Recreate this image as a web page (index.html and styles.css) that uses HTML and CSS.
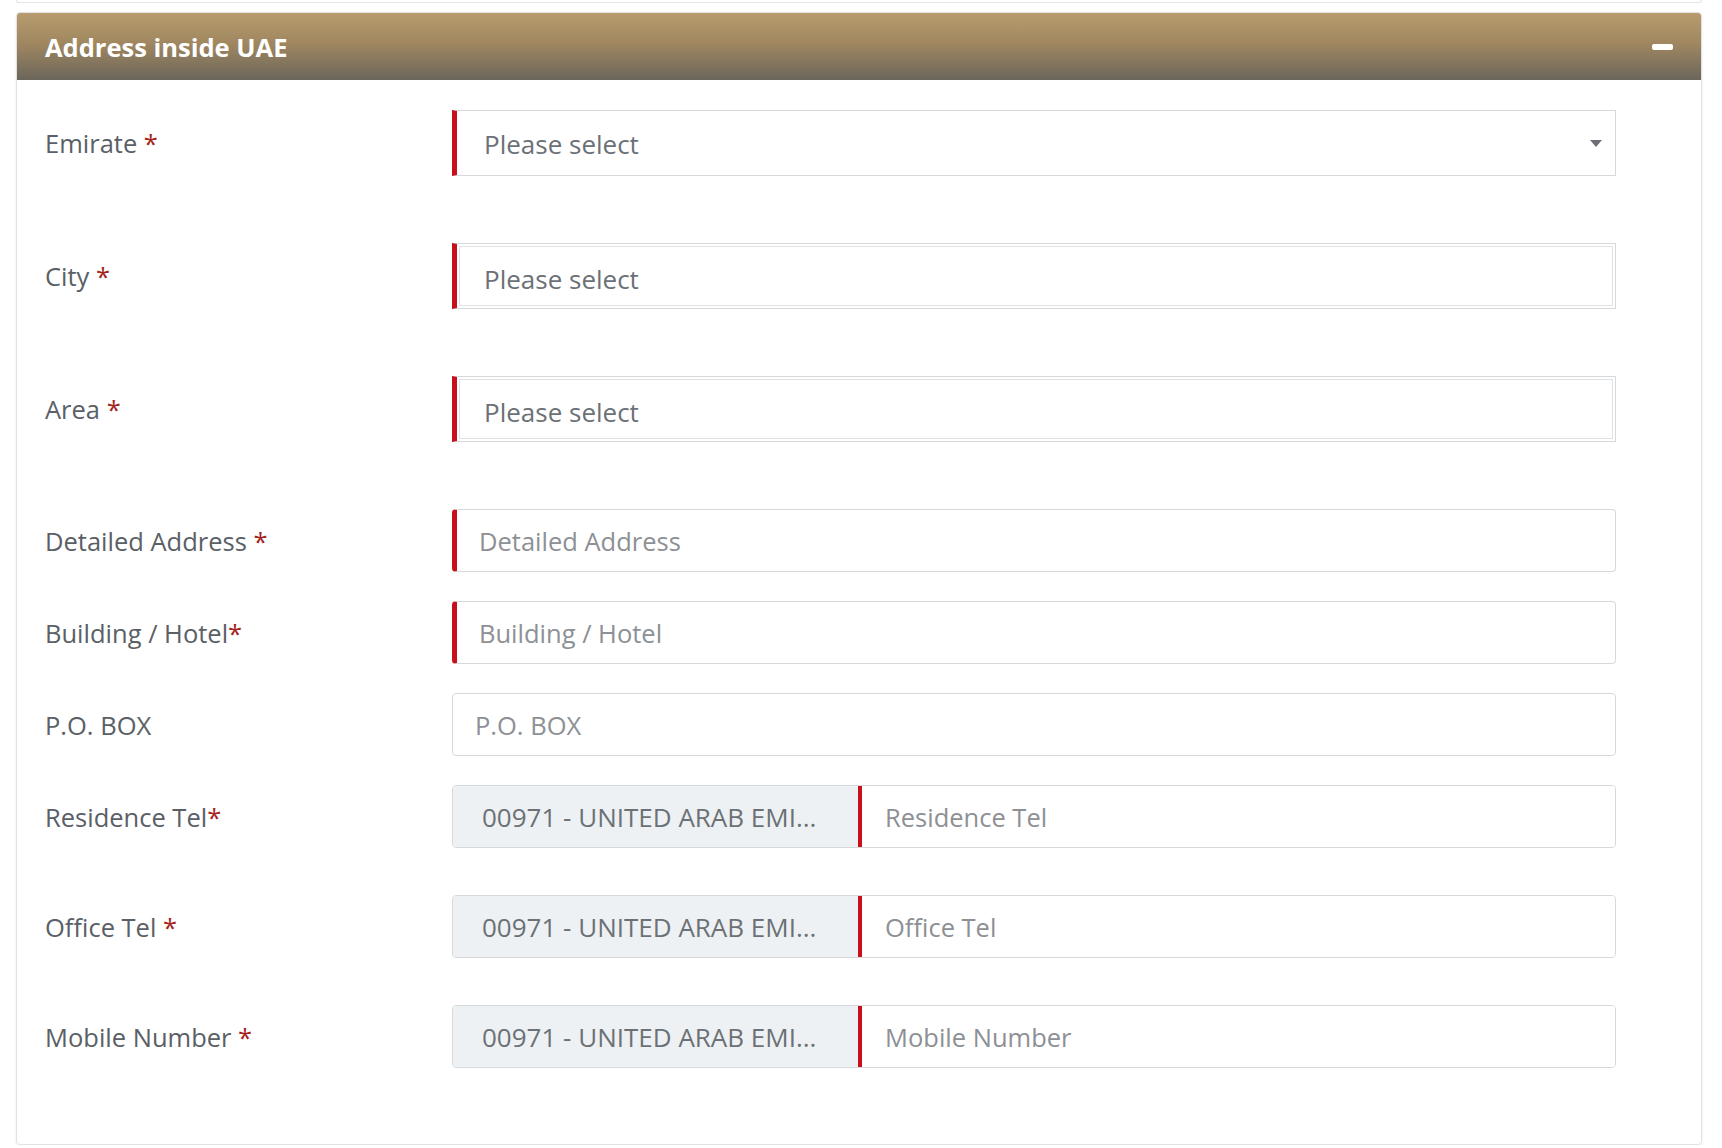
FILE: index.html
```html
<!DOCTYPE html>
<html lang="en">
<head>
    <meta charset="UTF-8">
    <meta name="viewport" content="width=device-width, initial-scale=1.0">
    <title>Address inside UAE</title>
    <link rel="stylesheet" href="styles.css">
</head>
<body>
    <div class="prev-card"></div>

    <div class="panel">
        <div class="panel-head">
            <h2>Address inside UAE</h2>
            <button class="collapse-btn" aria-label="Collapse"><span></span></button>
        </div>

        <div class="panel-body">
            <div class="row row-select">
                <label>Emirate <span class="req">*</span></label>
                <div class="select required">
                    <span>Please select</span>
                    <svg class="caret" viewBox="0 0 12 7"><path d="M0 0h12L6 7z"/></svg>
                </div>
            </div>

            <div class="row row-select">
                <label>City <span class="req">*</span></label>
                <div class="select required boxed">
                    <span>Please select</span>
                </div>
            </div>

            <div class="row row-select">
                <label>Area <span class="req">*</span></label>
                <div class="select required boxed">
                    <span>Please select</span>
                </div>
            </div>

            <div class="row">
                <label>Detailed Address <span class="req">*</span></label>
                <input type="text" class="field required" placeholder="Detailed Address">
            </div>

            <div class="row">
                <label>Building / Hotel<span class="req">*</span></label>
                <input type="text" class="field required" placeholder="Building / Hotel">
            </div>

            <div class="row">
                <label>P.O. BOX</label>
                <input type="text" class="field" placeholder="P.O. BOX">
            </div>

            <div class="row row-tel">
                <label>Residence Tel<span class="req">*</span></label>
                <div class="tel-group">
                    <div class="country">00971 - UNITED ARAB EMI...</div>
                    <input type="text" class="tel-input" placeholder="Residence Tel">
                </div>
            </div>

            <div class="row row-tel">
                <label>Office Tel <span class="req">*</span></label>
                <div class="tel-group">
                    <div class="country">00971 - UNITED ARAB EMI...</div>
                    <input type="text" class="tel-input" placeholder="Office Tel">
                </div>
            </div>

            <div class="row row-tel last">
                <label>Mobile Number <span class="req">*</span></label>
                <div class="tel-group">
                    <div class="country">00971 - UNITED ARAB EMI...</div>
                    <input type="text" class="tel-input" placeholder="Mobile Number">
                </div>
            </div>
        </div>
    </div>
</body>
</html>
```

FILE: styles.css
```css
:root {
    --red: #c8101c;
    --border: #d6d9dc;
    --label: #5a6066;
    --text: #6b7176;
    --placeholder: #8d9094;
}
* {
    box-sizing: border-box;
    margin: 0;
    padding: 0;
}
body {
    background: #fff;
    font-family: "Open Sans", Arial, sans-serif;
    color: var(--label);
}
.prev-card {
    height: 3px;
    margin: 0 20px 0 16px;
    border: 1px solid #e3e5e6;
    border-top: none;
    border-radius: 0 0 4px 4px;
}
.panel {
    margin: 9px 20px 0 16px;
    border: 1px solid #e0e2e3;
    border-radius: 4px;
    box-shadow: 0 1px 3px rgba(0,0,0,0.08);
    overflow: hidden;
}
.panel-head {
    display: flex;
    align-items: center;
    justify-content: space-between;
    height: 67px;
    padding: 0 28px 0 28px;
    background: linear-gradient(to bottom, #b89c6e 0%, #a08760 45%, #6b665b 100%);
}
.panel-head h2 {
    font-size: 25.5px;
    font-weight: 700;
    color: #fff;
}
.collapse-btn {
    background: none;
    border: none;
    cursor: pointer;
    display: flex;
}
.collapse-btn span {
    width: 21px;
    height: 6px;
    border-radius: 2px;
    background: #fff;
}
.panel-body {
    padding: 30px 85px 76px 28px;
}
.row {
    display: grid;
    grid-template-columns: 407px 1fr;
    align-items: center;
    height: 63px;
    margin-bottom: 29px;
}
.row-select {
    height: 66px;
    margin-bottom: 67px;
}
.row-tel {
    margin-bottom: 47px;
}
.row.last {
    margin-bottom: 0;
}
label {
    font-size: 25.5px;
    color: var(--label);
}
.req {
    color: #a3221c;
}
.select {
    display: flex;
    align-items: center;
    justify-content: space-between;
    height: 100%;
    padding: 1px 13px 0 27px;
    border: 1px solid var(--border);
    font-size: 26px;
    color: var(--text);
}
.select.boxed {
    padding-top: 5px;
    box-shadow: inset 0 0 0 2px #fff, inset 0 0 0 3px #dfe2e4;
}
.required {
    border-left: 5px solid var(--red);
}
.caret {
    width: 12px;
    height: 7px;
    fill: #6c7075;
}
.field {
    width: 100%;
    height: 100%;
    padding: 0 22px;
    border: 1px solid var(--border);
    border-radius: 4px;
    font-family: inherit;
    font-size: 25.5px;
    color: var(--text);
    outline: none;
}
.field.required {
    border-left: 5px solid var(--red);
}
.field::placeholder,
.tel-input::placeholder {
    color: var(--placeholder);
}
.tel-group {
    display: flex;
    height: 100%;
    border: 1px solid var(--border);
    border-radius: 4px;
    overflow: hidden;
}
.country {
    display: flex;
    align-items: center;
    width: 405px;
    padding-left: 29px;
    background: #eef1f3;
    font-size: 26px;
    color: var(--text);
    white-space: nowrap;
}
.tel-input {
    flex: 1;
    padding: 0 23px;
    border: none;
    border-left: 4px solid var(--red);
    font-family: inherit;
    font-size: 25.5px;
    color: var(--text);
    outline: none;
}
```
